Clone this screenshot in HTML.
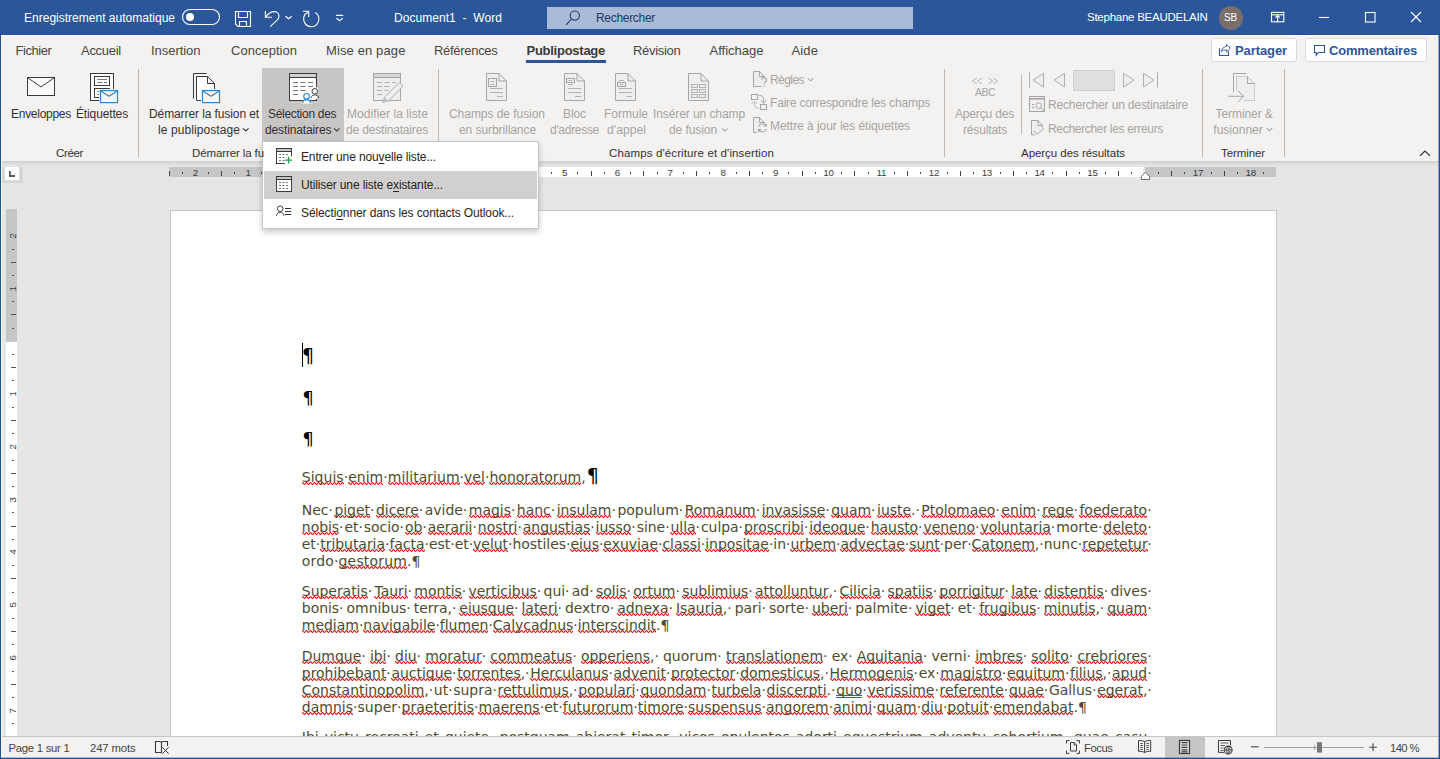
<!DOCTYPE html>
<html lang="fr">
<head>
<meta charset="utf-8">
<title>Document1 - Word</title>
<style>
*{box-sizing:border-box;margin:0;padding:0}
html,body{width:1440px;height:759px;overflow:hidden;background:#e6e6e6}
body{font-family:"Liberation Sans",sans-serif;font-size:12px;color:#323130}
#app{position:relative;width:1440px;height:759px;overflow:hidden;background:#e6e6e6}
.abs{position:absolute}
.t u{text-decoration:underline;text-decoration-thickness:1px;text-underline-offset:1.5px}
.t{position:absolute;white-space:pre;line-height:1;font-family:"Liberation Sans",sans-serif}
#title{position:absolute;left:0;top:0;width:1440px;height:35px;background:#2b579a}
#search{position:absolute;left:547px;top:7px;width:366px;height:22px;background:#a9bbd7}
#ribbon{position:absolute;left:1px;top:35px;width:1438px;height:126px;background:#f3f2f1}
#rshadow{position:absolute;left:1px;top:161px;width:1438px;height:6px;background:linear-gradient(#cfcecd,#dcdcdb 40%,#e6e6e6)}
.sep{position:absolute;width:1px;background:#bcb9b6;top:69px;height:88px}
#selbtn{position:absolute;left:262px;top:68px;width:82px;height:73px;background:#c8c6c4}
#tabul{position:absolute;left:526px;top:60px;width:80px;height:3px;background:#2b579a}
.btn{position:absolute;top:38px;height:24px;background:#fff;border:1px solid #dcdad8;border-radius:3px}
#menu{position:absolute;left:262px;top:141px;width:277px;height:88px;background:#fff;border:1px solid #c6c4c2;box-shadow:0 3px 6px rgba(0,0,0,.22)}
#mhl{position:absolute;left:264px;top:171px;width:273px;height:28px;background:#d2d0ce}
/* rulers */
#hr{position:absolute;left:169px;top:167px;width:1107px;height:10px;background:#c6c6c6}
#hrw{position:absolute;left:301px;top:167px;width:842px;height:10px;background:#fff}
#hrgap{position:absolute;left:1143px;top:167px;width:2px;height:10px;background:#e6e6e6}
.rn{position:absolute;top:167.5px;width:20px;height:10px;line-height:10px;text-align:center;font-size:9.8px;letter-spacing:-0.3px;color:#3c3c3c}
.tk{position:absolute;top:171px;width:1px;height:5px;background:#444}
.dt{position:absolute;top:172px;width:1px;height:2px;background:#444}
#vr{position:absolute;left:6px;top:209px;width:11px;height:527px;background:#fff}
#vrg{position:absolute;left:6px;top:209px;width:11px;height:133px;background:#c6c6c6}
.vn{position:absolute;left:3px;width:20px;height:20px;line-height:20px;text-align:center;font-size:9.6px;letter-spacing:-0.2px;color:#3c3c3c;transform:rotate(-90deg)}
.vtk{position:absolute;left:11px;width:5px;height:1px;background:#555}
.vdt{position:absolute;left:12px;width:2px;height:1px;background:#555}
#tabsel{position:absolute;left:2px;top:162px;width:21px;height:21px;background:#d6d6d6}
#tabsel i{position:absolute;left:3px;top:4px;width:14px;height:14px;background:#fdfdfd;box-shadow:0 0 0 1px #dcdcdc}
#page{position:absolute;left:170px;top:210px;width:1107px;height:527px;background:#fff;border:1px solid #c6c6c6;border-bottom:0}
/* doc text */
.ln{position:absolute;left:301.8px;width:845.5px;height:17px;line-height:17px;font-family:"DejaVu Sans","Liberation Sans",sans-serif;font-size:14px;color:#4f4b2e;white-space:nowrap;display:flex;justify-content:flex-start;align-items:baseline}
.ln.j{justify-content:space-between}
.ln .hang{position:absolute;left:845.5px}
.ln .w,.ln .d{display:block;flex:none}
.ln u{text-decoration:none;background:
linear-gradient(90deg,#f21818 0px,#f21818 1px,rgba(242,24,24,.38) 1px,rgba(242,24,24,.38) 2px,transparent 2px,transparent 3px,rgba(242,24,24,.38) 3px,rgba(242,24,24,.38) 4px) 0 13px/4px 1px repeat-x,
linear-gradient(90deg,rgba(242,24,24,.38) 0px,rgba(242,24,24,.38) 1px,#f21818 1px,#f21818 2px,rgba(242,24,24,.38) 2px,rgba(242,24,24,.38) 3px,#f21818 3px,#f21818 4px) 0 14px/4px 1px repeat-x,
linear-gradient(90deg,transparent 0px,transparent 1px,rgba(242,24,24,.38) 1px,rgba(242,24,24,.38) 2px,#f21818 2px,#f21818 3px,rgba(242,24,24,.38) 3px,rgba(242,24,24,.38) 4px) 0 15px/4px 1px repeat-x}
.ln u.gr{background:linear-gradient(#2160d6,#2160d6) 0 13px/100% 1px no-repeat,linear-gradient(#2160d6,#2160d6) 0 15px/100% 1px no-repeat}
.ln b.pm{font-weight:400;color:#4f4b2e}
b.bp{font-family:"DejaVu Sans",sans-serif;font-weight:400;color:#000;line-height:1;display:block}
.ln b.bp{line-height:0}
#status{position:absolute;left:1px;top:737px;width:1438px;height:21px;background:#f3f2f1}
#stline{position:absolute;left:1px;top:736px;width:1438px;height:1px;background:#c6c6c6}
#bl{position:absolute;left:0;top:35px;width:1px;height:724px;background:#1f4f98}
#br{position:absolute;left:1439px;top:35px;width:1px;height:724px;background:#1f4f98}
#br2{position:absolute;left:1438px;top:35px;width:1px;height:724px;background:#2b579a;opacity:.45}
#bb{position:absolute;left:0;top:758px;width:1440px;height:1px;background:#1f4f98}
#bb2{position:absolute;left:0;top:757px;width:1440px;height:1px;background:#2b579a;opacity:.35}
#stsel{position:absolute;left:1165px;top:737px;width:40px;height:21px;background:#c8c6c4}
svg{position:absolute;overflow:visible}
</style>
</head>
<body>
<div id="app">
<!-- document area -->
<div id="hr"></div><div id="hrw"></div><div id="hrgap"></div>
<i class="tk" style="left:169.0px"></i>
<i class="dt" style="left:181.6px"></i>
<span class="rn" style="left:185.3px">2</span>
<i class="dt" style="left:208.0px"></i>
<i class="tk" style="left:221.1px"></i>
<i class="dt" style="left:234.3px"></i>
<span class="rn" style="left:238.0px">1</span>
<i class="dt" style="left:260.7px"></i>
<i class="tk" style="left:273.9px"></i>
<i class="dt" style="left:287.1px"></i>
<i class="dt" style="left:313.5px"></i>
<i class="tk" style="left:326.7px"></i>
<i class="dt" style="left:339.9px"></i>
<span class="rn" style="left:343.6px">1</span>
<i class="dt" style="left:366.3px"></i>
<i class="tk" style="left:379.5px"></i>
<i class="dt" style="left:392.6px"></i>
<span class="rn" style="left:396.3px">2</span>
<i class="dt" style="left:419.0px"></i>
<i class="tk" style="left:432.2px"></i>
<i class="dt" style="left:445.4px"></i>
<span class="rn" style="left:449.1px">3</span>
<i class="dt" style="left:471.8px"></i>
<i class="tk" style="left:485.0px"></i>
<i class="dt" style="left:498.2px"></i>
<span class="rn" style="left:501.9px">4</span>
<i class="dt" style="left:524.6px"></i>
<i class="tk" style="left:537.8px"></i>
<i class="dt" style="left:551.0px"></i>
<span class="rn" style="left:554.7px">5</span>
<i class="dt" style="left:577.3px"></i>
<i class="tk" style="left:590.5px"></i>
<i class="dt" style="left:603.7px"></i>
<span class="rn" style="left:607.4px">6</span>
<i class="dt" style="left:630.1px"></i>
<i class="tk" style="left:643.3px"></i>
<i class="dt" style="left:656.5px"></i>
<span class="rn" style="left:660.2px">7</span>
<i class="dt" style="left:682.9px"></i>
<i class="tk" style="left:696.1px"></i>
<i class="dt" style="left:709.3px"></i>
<span class="rn" style="left:713.0px">8</span>
<i class="dt" style="left:735.7px"></i>
<i class="tk" style="left:748.8px"></i>
<i class="dt" style="left:762.0px"></i>
<span class="rn" style="left:765.7px">9</span>
<i class="dt" style="left:788.4px"></i>
<i class="tk" style="left:801.6px"></i>
<i class="dt" style="left:814.8px"></i>
<span class="rn" style="left:818.5px">10</span>
<i class="dt" style="left:841.2px"></i>
<i class="tk" style="left:854.4px"></i>
<i class="dt" style="left:867.6px"></i>
<span class="rn" style="left:871.3px">11</span>
<i class="dt" style="left:894.0px"></i>
<i class="tk" style="left:907.2px"></i>
<i class="dt" style="left:920.3px"></i>
<span class="rn" style="left:924.0px">12</span>
<i class="dt" style="left:946.7px"></i>
<i class="tk" style="left:959.9px"></i>
<i class="dt" style="left:973.1px"></i>
<span class="rn" style="left:976.8px">13</span>
<i class="dt" style="left:999.5px"></i>
<i class="tk" style="left:1012.7px"></i>
<i class="dt" style="left:1025.9px"></i>
<span class="rn" style="left:1029.6px">14</span>
<i class="dt" style="left:1052.3px"></i>
<i class="tk" style="left:1065.5px"></i>
<i class="dt" style="left:1078.7px"></i>
<span class="rn" style="left:1082.4px">15</span>
<i class="dt" style="left:1105.0px"></i>
<i class="tk" style="left:1118.2px"></i>
<i class="dt" style="left:1131.4px"></i>
<i class="dt" style="left:1157.8px"></i>
<i class="tk" style="left:1171.0px"></i>
<i class="dt" style="left:1184.2px"></i>
<span class="rn" style="left:1187.9px">17</span>
<i class="dt" style="left:1210.6px"></i>
<i class="tk" style="left:1223.8px"></i>
<i class="dt" style="left:1237.0px"></i>
<span class="rn" style="left:1240.7px">18</span>
<i class="dt" style="left:1263.4px"></i>
<div id="tabsel"><i></i></div>
<div id="page"></div>
<div id="vr"></div><div id="vrg"></div>
<div id="vruler" class="abs" style="left:0;top:0">
<span class="vn" style="top:225.8px">2</span>
<i class="vdt" style="top:248.5px"></i>
<i class="vtk" style="top:261.6px"></i>
<i class="vdt" style="top:274.8px"></i>
<span class="vn" style="top:278.5px">1</span>
<i class="vdt" style="top:301.2px"></i>
<i class="vtk" style="top:314.4px"></i>
<i class="vdt" style="top:327.6px"></i>
<i class="vdt" style="top:354.0px"></i>
<i class="vtk" style="top:367.2px"></i>
<i class="vdt" style="top:380.4px"></i>
<span class="vn" style="top:384.1px">1</span>
<i class="vdt" style="top:406.8px"></i>
<i class="vtk" style="top:420.0px"></i>
<i class="vdt" style="top:433.1px"></i>
<span class="vn" style="top:436.8px">2</span>
<i class="vdt" style="top:459.5px"></i>
<i class="vtk" style="top:472.7px"></i>
<i class="vdt" style="top:485.9px"></i>
<span class="vn" style="top:489.6px">3</span>
<i class="vdt" style="top:512.3px"></i>
<i class="vtk" style="top:525.5px"></i>
<i class="vdt" style="top:538.7px"></i>
<span class="vn" style="top:542.4px">4</span>
<i class="vdt" style="top:565.1px"></i>
<i class="vtk" style="top:578.3px"></i>
<i class="vdt" style="top:591.5px"></i>
<span class="vn" style="top:595.2px">5</span>
<i class="vdt" style="top:617.8px"></i>
<i class="vtk" style="top:631.0px"></i>
<i class="vdt" style="top:644.2px"></i>
<span class="vn" style="top:647.9px">6</span>
<i class="vdt" style="top:670.6px"></i>
<i class="vtk" style="top:683.8px"></i>
<i class="vdt" style="top:697.0px"></i>
<span class="vn" style="top:700.7px">7</span>
<i class="vdt" style="top:723.4px"></i>
</div>
<!-- DOCTEXT -->
<div class="ln j" style="top:502px;letter-spacing:-0.040px"><span class="w">Nec·</span><span class="w"><u class="sp">piget</u>·</span><span class="w"><u class="sp">dicere</u>·</span><span class="w">avide·</span><span class="w"><u class="sp">magis</u>·</span><span class="w"><u class="sp">hanc</u>·</span><span class="w"><u class="sp">insulam</u>·</span><span class="w">populum·</span><span class="w"><u class="sp">Romanum</u>·</span><span class="w"><u class="sp">invasisse</u>·</span><span class="w"><u class="sp">quam</u>·</span><span class="w"><u class="sp">iuste</u>.·</span><span class="w"><u class="sp">Ptolomaeo</u>·</span><span class="w"><u class="sp">enim</u>·</span><span class="w"><u class="sp">rege</u>·</span><span class="w"><u class="sp">foederato</u></span><span class="d hang">·</span></div>
<div class="ln j" style="top:519px;letter-spacing:-0.040px"><span class="w"><u class="sp">nobis</u>·</span><span class="w">et·</span><span class="w">socio·</span><span class="w"><u class="sp">ob</u>·</span><span class="w"><u class="sp">aerarii</u>·</span><span class="w"><u class="sp">nostri</u>·</span><span class="w"><u class="sp">angustias</u>·</span><span class="w"><u class="sp">iusso</u>·</span><span class="w">sine·</span><span class="w"><u class="sp">ulla</u>·</span><span class="w">culpa·</span><span class="w"><u class="sp">proscribi</u>·</span><span class="w"><u class="sp">ideoque</u>·</span><span class="w"><u class="sp">hausto</u>·</span><span class="w"><u class="sp">veneno</u>·</span><span class="w"><u class="sp">voluntaria</u>·</span><span class="w">morte·</span><span class="w"><u class="sp">deleto</u></span><span class="d hang">·</span></div>
<div class="ln j" style="top:536px;letter-spacing:-0.042px"><span class="w">et·</span><span class="w"><u class="sp">tributaria</u>·</span><span class="w"><u class="sp">facta</u>·</span><span class="w">est·</span><span class="w">et·</span><span class="w"><u class="sp">velut</u>·</span><span class="w">hostiles·</span><span class="w"><u class="sp">eius</u>·</span><span class="w"><u class="sp">exuviae</u>·</span><span class="w"><u class="sp">classi</u>·</span><span class="w"><u class="sp">inpositae</u>·</span><span class="w">in·</span><span class="w"><u class="sp">urbem</u>·</span><span class="w"><u class="sp">advectae</u>·</span><span class="w"><u class="sp">sunt</u>·</span><span class="w">per·</span><span class="w"><u class="sp">Catonem</u>,·</span><span class="w">nunc·</span><span class="w"><u class="sp">repetetur</u></span><span class="d hang">·</span></div>
<div class="ln" style="top:553px;letter-spacing:0.160px"><span class="w">ordo·</span><span class="w"><u class="sp">gestorum</u>.<b class="pm">¶</b></span></div>
<div class="ln j" style="top:583px;letter-spacing:-0.040px"><span class="w"><u class="sp">Superatis</u>·</span><span class="w"><u class="sp">Tauri</u>·</span><span class="w"><u class="sp">montis</u>·</span><span class="w"><u class="sp">verticibus</u>·</span><span class="w">qui·</span><span class="w">ad·</span><span class="w"><u class="sp">solis</u>·</span><span class="w"><u class="sp">ortum</u>·</span><span class="w"><u class="sp">sublimius</u>·</span><span class="w"><u class="sp">attolluntur</u>,·</span><span class="w"><u class="sp">Cilicia</u>·</span><span class="w"><u class="sp">spatiis</u>·</span><span class="w"><u class="sp">porrigitur</u>·</span><span class="w"><u class="sp">late</u>·</span><span class="w"><u class="sp">distentis</u>·</span><span class="w">dives</span><span class="d hang">·</span></div>
<div class="ln j" style="top:600px;letter-spacing:-0.040px"><span class="w">bonis·</span><span class="w">omnibus·</span><span class="w">terra,·</span><span class="w"><u class="sp">eiusque</u>·</span><span class="w"><u class="sp">lateri</u>·</span><span class="w">dextro·</span><span class="w"><u class="sp">adnexa</u>·</span><span class="w"><u class="sp">Isauria</u>,·</span><span class="w">pari·</span><span class="w">sorte·</span><span class="w"><u class="sp">uberi</u>·</span><span class="w">palmite·</span><span class="w"><u class="sp">viget</u>·</span><span class="w">et·</span><span class="w"><u class="sp">frugibus</u>·</span><span class="w"><u class="sp">minutis</u>,·</span><span class="w"><u class="sp">quam</u></span><span class="d hang">·</span></div>
<div class="ln" style="top:617px;letter-spacing:-0.030px"><span class="w"><u class="sp">mediam</u>·</span><span class="w"><u class="sp">navigabile</u>·</span><span class="w"><u class="sp">flumen</u>·</span><span class="w"><u class="sp">Calycadnus</u>·</span><span class="w"><u class="sp">interscindit</u>.<b class="pm">¶</b></span></div>
<div class="ln j" style="top:648px;letter-spacing:-0.040px"><span class="w"><u class="sp">Dumque</u>·</span><span class="w"><u class="sp">ibi</u>·</span><span class="w"><u class="sp">diu</u>·</span><span class="w"><u class="sp">moratur</u>·</span><span class="w"><u class="sp">commeatus</u>·</span><span class="w"><u class="sp">opperiens</u>,·</span><span class="w">quorum·</span><span class="w"><u class="sp">translationem</u>·</span><span class="w">ex·</span><span class="w"><u class="sp">Aquitania</u>·</span><span class="w">verni·</span><span class="w"><u class="sp">imbres</u>·</span><span class="w"><u class="sp">solito</u>·</span><span class="w"><u class="sp">crebriores</u></span><span class="d hang">·</span></div>
<div class="ln j" style="top:665px;letter-spacing:-0.040px"><span class="w"><u class="sp">prohibebant</u>·</span><span class="w"><u class="sp">auctique</u>·</span><span class="w"><u class="sp">torrentes</u>,·</span><span class="w"><u class="sp">Herculanus</u>·</span><span class="w"><u class="sp">advenit</u>·</span><span class="w"><u class="sp">protector</u>·</span><span class="w"><u class="sp">domesticus</u>,·</span><span class="w"><u class="sp">Hermogenis</u>·</span><span class="w">ex·</span><span class="w"><u class="sp">magistro</u>·</span><span class="w"><u class="sp">equitum</u>·</span><span class="w"><u class="sp">filius</u>,·</span><span class="w"><u class="sp">apud</u></span><span class="d hang">·</span></div>
<div class="ln j" style="top:682px;letter-spacing:-0.040px"><span class="w"><u class="sp">Constantinopolim</u>,·</span><span class="w">ut·</span><span class="w">supra·</span><span class="w"><u class="sp">rettulimus</u>,·</span><span class="w"><u class="sp">populari</u>·</span><span class="w"><u class="sp">quondam</u>·</span><span class="w"><u class="sp">turbela</u>·</span><span class="w"><u class="sp">discerpti</u>.·</span><span class="w"><u class="gr">quo</u>·</span><span class="w"><u class="sp">verissime</u>·</span><span class="w"><u class="sp">referente</u>·</span><span class="w"><u class="sp">quae</u>·</span><span class="w">Gallus·</span><span class="w"><u class="sp">egerat</u>,</span><span class="d hang">·</span></div>
<div class="ln" style="top:699px;letter-spacing:0.018px"><span class="w"><u class="sp">damnis</u>·</span><span class="w">super·</span><span class="w"><u class="sp">praeteritis</u>·</span><span class="w"><u class="sp">maerens</u>·</span><span class="w">et·</span><span class="w"><u class="sp">futurorum</u>·</span><span class="w"><u class="sp">timore</u>·</span><span class="w"><u class="sp">suspensus</u>·</span><span class="w"><u class="sp">angorem</u>·</span><span class="w"><u class="sp">animi</u>·</span><span class="w"><u class="sp">quam</u>·</span><span class="w"><u class="sp">diu</u>·</span><span class="w"><u class="sp">potuit</u>·</span><span class="w"><u class="sp">emendabat</u>.<b class="pm">¶</b></span></div>
<div class="ln j" style="top:729px;letter-spacing:-0.040px"><span class="w">Ibi·</span><span class="w">victu·</span><span class="w">recreati·</span><span class="w">et·</span><span class="w">quiete,·</span><span class="w">postquam·</span><span class="w">abierat·</span><span class="w">timor,·</span><span class="w">vicos·</span><span class="w">opulentos·</span><span class="w">adorti·</span><span class="w">equestrium·</span><span class="w">adventu·</span><span class="w">cohortium,·</span><span class="w">quae·</span><span class="w">casu</span><span class="d hang">·</span></div>
<div class="ln" style="top:469px;letter-spacing:0.024px"><span class="w"><u class="sp">Siquis</u>·</span><span class="w"><u class="sp">enim</u>·</span><span class="w"><u class="sp">militarium</u>·</span><span class="w"><u class="sp">vel</u>·</span><span class="w"><u class="sp">honoratorum</u>,</span><b class="bp" style="font-size:19px;margin-left:1px">¶</b></div>
<b class="bp abs" style="left:301.9px;top:345.8px;font-size:19px">¶</b>
<b class="bp abs" style="left:302.4px;top:389.6px;font-size:17.7px">¶</b>
<b class="bp abs" style="left:302.4px;top:430.8px;font-size:17.7px">¶</b>
<i class="abs" style="left:302px;top:343px;width:1px;height:24px;background:#000"></i>
<!-- title bar -->
<div id="title"></div>
<div id="search"></div>
<!-- ribbon -->
<div id="ribbon"></div>
<div id="rshadow"></div>
<div id="selbtn"></div>
<div id="tabul"></div>
<div class="sep" style="left:138px"></div>
<div class="sep" style="left:438px"></div>
<div class="sep" style="left:944px"></div>
<div class="sep" style="left:1021px;top:75px;height:59px"></div>
<div class="sep" style="left:1202px"></div>
<div class="sep" style="left:1284px"></div>
<div class="btn" style="left:1211px;width:86px"></div>
<div class="btn" style="left:1305px;width:122px"></div>
<!-- status -->
<div id="stline"></div>
<div id="status"></div>
<div id="stsel"></div>
<!-- menu -->
<div id="menu"></div>
<div id="mhl"></div>
<svg width="1440" height="759" viewBox="0 0 1440 759" style="left:0;top:0"><g fill="none" stroke="#fff" stroke-width="1.1">
<!-- toggle -->
<rect x="182.5" y="9.5" width="37" height="15" rx="7.5"/>
<circle cx="190" cy="17" r="4" fill="#fff" stroke="none"/>
<!-- save -->
<path d="M235.5 11.5H250.5V26.5H238L235.5 24Z"/>
<path d="M238.5 11.5V17.5H247.5V11.5"/>
<path d="M239.5 26.5V21.5H246.5V26.5"/>
<!-- undo -->
<path d="M265.4 11V17.3H271.8"/>
<path d="M265.6 17.1C268 13.6 271.5 11.6 274.6 11.6C277.4 11.6 279 13.8 279 16.2C279 18 278 19.3 276.6 20.6L270.2 26.7"/>
<path d="M285.4 16.2L288.6 18.8L291.8 16.2" stroke-width="1.2"/>
<!-- redo -->
<path d="M303 11.3H308.7V17"/>
<path d="M308.3 11.9A7.7 7.7 0 1 0 315.2 12.4"/>
<!-- qat customize -->
<path d="M336 15.4H343.2M336.4 18.1L339.6 20.7L342.8 18.1" stroke-width="1.2"/>
<!-- window controls -->
<path d="M1319 17.5H1329"/>
<rect x="1365.5" y="12.5" width="9.5" height="9.5"/>
<path d="M1411 12L1421 22M1421 12L1411 22"/>
<!-- ribbon display options -->
<rect x="1271.5" y="12.4" width="12.3" height="9.4"/>
<path d="M1271.5 14.8H1284" stroke-width="1.1"/>
<path d="M1277.6 21.8V15.2M1275.4 17.7L1277.6 15.5L1279.8 17.7" stroke-width="1.1"/>
</g>
<!-- search magnifier -->
<g fill="none" stroke="#1d3765" stroke-width="1.1">
<circle cx="574.8" cy="15.6" r="4.6"/>
<path d="M571.4 19L566.2 24.8"/>
</g>
<!-- avatar -->
<circle cx="1231" cy="18" r="12" fill="#7a6e6b"/>
<!-- ===== ribbon: enabled icons ===== -->
<g fill="#fafafa" stroke="#3b3a39" stroke-width="1">
<!-- Enveloppes -->
<rect x="27.5" y="77.5" width="27" height="18"/>
<path d="M27.8 77.8L41 87L54.2 77.8" fill="none"/>
<!-- Etiquettes -->
<rect x="90.5" y="73.5" width="23" height="27" fill="#fff"/>
<rect x="94.5" y="76.5" width="15" height="9" fill="#fff"/>
<rect x="94.5" y="88.5" width="15" height="9" fill="#fff"/>
<path d="M97.2 79.5H107M97.2 82.5H102.5M104 82.5H107M97.2 91.5H100M97.2 94.5H100" stroke="#797775" fill="none"/>
<!-- Demarrer la fusion -->
<path d="M206.5 73.5H193.5V98.7" fill="none"/>
<path d="M196.5 100.5V76.5H207.5L214.5 83.5V100.5Z" fill="#fff"/>
<path d="M207.5 76.5V83.5H214.5" fill="none"/>
</g>
<!-- blue envelopes -->
<g fill="#fafafa" stroke="#2488d8" stroke-width="1.2">
<rect x="99" y="89" width="20" height="15" fill="#f3f2f1" stroke="none"/>
<rect x="100.5" y="90.6" width="17" height="12"/>
<path d="M100.8 90.9L109 96.3L117.2 90.9" fill="none"/>
<rect x="201" y="89" width="20" height="15" fill="#f3f2f1" stroke="none"/>
<rect x="202.5" y="90.6" width="17" height="12"/>
<path d="M202.8 90.9L211 96.3L219.2 90.9" fill="none"/>
</g>
<!-- Selection des destinataires -->
<g fill="#fff" stroke="#3b3a39" stroke-width="1">
<rect x="289.5" y="73.5" width="27" height="27"/>
<rect x="289.5" y="73.5" width="27" height="4" fill="#d2d0ce"/>
<path d="M293 82.5H298M300.3 82.5H305.6M308 82.5H313M293 86.5H298M300.3 86.5H305.6M308 86.5H313M293 90.5H298M300.3 90.5H305.6M293 94.5H298" stroke="#797775" fill="none"/>
<!-- halo -->
<circle cx="314.8" cy="91.3" r="4.3" fill="#fff" stroke="none"/>
<path d="M309.6 99C310 94 319.6 94 320 99Z" fill="#fff" stroke="none"/>
<rect x="317" y="90" width="3.5" height="9" fill="#c8c6c4" stroke="none"/>
<circle cx="314.8" cy="91.3" r="2.8"/>
<path d="M311 98C311.3 93.8 318.3 93.8 318.6 98" fill="none"/>
<rect x="301" y="100.9" width="12" height="3" fill="#c8c6c4" stroke="none"/>
<circle cx="306.6" cy="96.3" r="4.2" fill="#fff" stroke="none"/>
<path d="M301.4 103.4C301.8 98.6 311.4 98.6 311.8 103.4Z" fill="#fff" stroke="none"/>
<circle cx="306.6" cy="96.3" r="2.8" stroke="#2488d8" stroke-width="1.2"/>
<path d="M302.6 103C303 98.6 310.2 98.6 310.6 103" fill="none" stroke="#2488d8" stroke-width="1.2"/>
</g>
<!-- ===== ribbon: disabled icons ===== -->
<g fill="#efeeed" stroke="#a8a6a4" stroke-width="1">
<!-- Modifier la liste -->
<rect x="373.5" y="73.5" width="27" height="27"/>
<rect x="373.5" y="73.5" width="27" height="4" fill="#d8d6d4"/>
<path d="M377 82.5H382M384.3 82.5H389.6M392 82.5H396M377 86.5H382M384.3 86.5H389.6M377 90.5H382M384.3 90.5H388M377 94.5H382" stroke="#b5b3b1" fill="none"/>
<path d="M382.8 102.3L384.6 97.2L398.2 83.6A2 2 0 0 1 401 83.6L402 84.6A2 2 0 0 1 402 87.4L388.2 101Z" fill="#f1f0ef" stroke="#b0aeac"/>
<path d="M382.8 102.3L384.6 97.2L388.2 101Z" fill="#c4c2c0" stroke="none"/>
<!-- Champs de fusion -->
<path d="M486.5 73.5H499L506.5 81V100.5H486.5Z"/>
<path d="M499 73.5V81H506.5" fill="none"/>
<rect x="488.5" y="78.5" width="8" height="8" fill="none"/>
<path d="M490.5 81.5H494.5M490.5 84.5H494.5M490 88.5H503M490 92.5H503M497 96.5H503" fill="none" stroke="#b5b3b1"/>
<!-- Bloc d'adresse -->
<path d="M564.5 73.5H577L584.5 81V100.5H564.5Z"/>
<path d="M577 73.5V81H584.5" fill="none"/>
<rect x="566.5" y="78.5" width="8" height="4" fill="none"/>
<path d="M568.5 80.5H572.5M568 84.5H573M568 88.5H581M568 92.5H581M575 96.5H581" fill="none" stroke="#b5b3b1"/>
<!-- Formule d'appel -->
<path d="M615.5 73.5H628L635.5 81V100.5H615.5Z"/>
<path d="M628 73.5V81H635.5" fill="none"/>
<rect x="617.5" y="82.5" width="8" height="4" fill="none"/>
<path d="M619 80.5H624M619.5 84.5H623.5M619 88.5H632M619 92.5H632M626 96.5H632" fill="none" stroke="#b5b3b1"/>
<!-- Inserer un champ de fusion -->
<path d="M688.5 73.5H701L708.5 81V100.5H688.5Z"/>
<path d="M701 73.5V81H708.5" fill="none"/>
<g fill="none" stroke="#b5b3b1"><rect x="691.5" y="84.5" width="6" height="3"/><rect x="699.5" y="84.5" width="6" height="3"/><rect x="691.5" y="89.5" width="6" height="3"/><rect x="699.5" y="89.5" width="6" height="3"/><rect x="691.5" y="94.5" width="6" height="3"/><rect x="699.5" y="94.5" width="6" height="3"/></g>
<!-- Regles -->
<path d="M761.5 86.5H753.5V71.5H759.5L764.5 76.5V78"/>
<path d="M759.5 71.5V76.5H764.5" fill="none"/>
<path d="M761.6 79.6C761.8 77 766.6 77 766.6 79.8C766.6 81.8 764.2 81.8 764.2 84.2M764.2 85.8V86.9" fill="none" stroke="#a8a6a4" stroke-width="1.1"/>
<!-- Faire correspondre -->
<rect x="751.5" y="94.5" width="6" height="5" fill="none"/>
<rect x="760.5" y="104.5" width="6" height="5" fill="none"/>
<path d="M758.6 95.2C762 95.2 763.6 97 763.6 99.5V103M760.9 100.4L763.6 103.2L766.3 100.4" fill="none"/>
<path d="M759.2 108.3C756 108.3 754.4 106.5 754.4 104V101.2M751.6 103.9L754.4 101L757.2 103.9" fill="none" stroke="#bdbbb9"/>
<!-- Mettre a jour les etiquettes -->
<path d="M757 132.5H753.5V117.5H759.5L764.5 122.5V123"/>
<path d="M759.5 117.5V122.5H764.5" fill="none"/>
<path d="M758.6 126.6A4 4 0 0 1 765.8 125.6M766.2 123.4V126H763.6M766.2 129A4 4 0 0 1 759 130M758.6 132.2V129.6H761.2" fill="none" stroke="#a8a6a4" stroke-width="1.1"/>
<!-- Apercu des resultats chevrons -->
<path d="M977 78L972.5 81L977 84M982 78L977.5 81L982 84M988.2 78L992.7 81L988.2 84M993.2 78L997.7 81L993.2 84" fill="none" stroke="#b0aeac" stroke-width="0.9"/>
<!-- record navigation -->
<path d="M1029.5 72V87.5" fill="none" stroke="#b0aeac"/>
<path d="M1043.5 73.3V87L1033 80.15Z" stroke="#b0aeac"/>
<path d="M1064.5 73.3V87L1054 80.15Z" stroke="#b0aeac"/>
<rect x="1073.5" y="70.5" width="41" height="20" fill="#e1dfdd" stroke="#d2d0ce"/>
<path d="M1123.5 73.3V87L1134 80.15Z" stroke="#b0aeac"/>
<path d="M1143.5 73.3V87L1154 80.15Z" stroke="#b0aeac"/>
<path d="M1157.5 72V87.5" fill="none" stroke="#b0aeac"/>
<!-- Rechercher un destinataire -->
<rect x="1029.5" y="96.5" width="15" height="15"/>
<path d="M1029.5 98.8H1044.5" stroke-width="1.6" fill="none"/>
<path d="M1032 104.5H1034M1032 107.5H1034" fill="none"/>
<circle cx="1038.6" cy="105.6" r="2.8" fill="#f3f2f1"/>
<path d="M1040.6 107.6L1045 112" fill="none"/>
<!-- Rechercher les erreurs -->
<path d="M1034.8 134.8H1031.5V120.5H1038L1042.5 125.5V127.6"/>
<path d="M1038 120.5V125.5H1042.5" fill="none"/>
<path d="M1033.8 131L1036.9 134.4L1044.4 127.9" fill="none"/>
<!-- Terminer & fusionner -->
<path d="M1246.5 73.5H1233.5V92.5" fill="none"/>
<path d="M1236.5 90V76.5H1247.5L1254.5 83.5V100.5H1244" />
<path d="M1236.5 90V76.5H1247.5L1254.5 83.5V100.5H1244L1244 93Z" stroke="none"/>
<path d="M1247.5 76.5V83.5H1254.5" fill="none"/>
<path d="M1228.3 96.3H1243.4M1237.6 90.7L1243.6 96.3L1237.6 102.2" fill="none"/>
</g>
<!-- label chevrons -->
<g fill="none" stroke="#3b3a39" stroke-width="1.1">
<path d="M243 128.3L245.8 131L248.6 128.3"/>
<path d="M334 128.3L336.8 131L339.6 128.3"/>
</g>
<g fill="none" stroke="#a8a6a4" stroke-width="1.1">
<path d="M722 128.3L724.8 131L727.6 128.3"/>
<path d="M807.8 78.2L810.6 80.8L813.4 78.2"/>
<path d="M1266.7 128.2L1269.5 130.8L1272.3 128.2"/>
</g>
<!-- ===== dropdown menu icons ===== -->
<g fill="#fff" stroke="#3b3a39" stroke-width="1">
<rect x="276.5" y="148.5" width="15" height="15"/>
<rect x="276.5" y="148.5" width="15" height="3" fill="#c8c6c4"/>
<path d="M279 154.5H281M282.5 154.5H284.5M286 154.5H288M279 157.5H281M282.5 157.5H284.5M286 157.5H288M279 160.5H281M282.5 160.5H284.5" stroke="#797775" fill="none"/>
<rect x="284.8" y="156.3" width="8" height="8" fill="#fff" stroke="none"/>
<path d="M288.6 156.8V163.6M285.2 160.2H292" stroke="#21a045" stroke-width="1.3" fill="none"/>
<rect x="276.5" y="176.5" width="15" height="15"/>
<rect x="276.5" y="176.5" width="15" height="3" fill="#c8c6c4"/>
<path d="M279 182.5H281M282.5 182.5H284.5M286 182.5H288M279 185.5H281M282.5 185.5H284.5M286 185.5H288M279 188.5H281M282.5 188.5H284.5M286 188.5H288" stroke="#797775" fill="none"/>
<circle cx="280.2" cy="208.7" r="2.8" fill="none"/>
<path d="M276.5 215.8C276.8 211 283.6 211 283.9 215.8" fill="none"/>
<path d="M285 208.5H291.2M285 211.5H291.2M285 214.5H291.2" fill="none"/>
</g>
<!-- ===== Partager / Commentaires icons ===== -->
<g fill="none" stroke="#2b579a" stroke-width="1.1">
<path d="M1219.5 48.2V55.5H1228.5V51.3"/>
<path d="M1221.4 51.6C1221.8 48.6 1223.6 46.8 1226.5 46.4V44.4L1230.3 48.2L1226.5 51.9V49.9C1224.2 49.8 1222.6 50.3 1221.4 51.6Z" stroke-width="0.9"/>
<path d="M1314.5 45.5H1324.5V52.5H1318.5L1316.2 55.2V52.5H1314.5Z"/>
</g>
<!-- ===== status bar icons ===== -->
<g fill="none" stroke="#3b3a39" stroke-width="1.1">
<!-- proofing -->
<path d="M161.5 743.2V752.5H155.5V741.5H159.8Q161.5 741.5 161.5 743.2Q161.5 741.5 163.2 741.5H167.5V746"/>
<path d="M162.4 747.3L168.7 753.7M168.7 747.3L162.4 753.7" stroke-width="1"/>
<!-- focus -->
<path d="M1066.5 743.4V740.6H1069.4M1076.6 740.6H1079.5V743.4M1079.5 750.6V753.4H1076.6M1069.4 753.4H1066.5V750.6" stroke-width="1"/>
<path d="M1070.5 751V742.5H1074.2L1076.5 744.8V751Z" stroke-width="1"/>
<path d="M1074 742.6V745H1076.4" stroke-width="0.8"/>
<!-- read mode -->
<path d="M1144.6 741.8V752.6M1144.6 741.8C1143 740.6 1140.6 740.4 1138.5 740.6V751.4C1140.6 751.2 1143 751.4 1144.6 752.6C1146.2 751.4 1148.6 751.2 1150.7 751.4V740.6C1148.6 740.4 1146.2 740.6 1144.6 741.8Z" stroke-width="1"/>
<path d="M1140.3 743.5H1142.8M1140.3 745.5H1142.8M1140.3 747.5H1142.8M1140.3 749.5H1142.8M1146.4 743.5H1148.9M1146.4 745.5H1148.9M1146.4 747.5H1148.9M1146.4 749.5H1148.9" stroke-width="0.9"/>
<!-- print layout -->
<rect x="1179.5" y="740.5" width="10" height="13" stroke-width="1.2" fill="#e6e4e2"/>
<path d="M1181.5 742.6H1187.5M1181.5 745H1187.5M1181.5 747.4H1187.5M1181.5 749.8H1187.5M1181.5 751.8H1187.5" stroke-width="1.2"/>
<!-- web layout -->
<path d="M1224 752.4H1218.5V740.5H1230.5V745.5" stroke-width="1"/>
<path d="M1220.5 743H1228.5M1220.5 745.5H1225M1220.5 748H1223.5M1220.5 750.5H1223.5" stroke-width="1" stroke="#605e5c"/>
<circle cx="1228.2" cy="750" r="3.9" fill="#f3f2f1" stroke-width="1.1"/>
<path d="M1224.3 750H1232.1M1228.2 746.1V753.9M1228.2 746.1C1225.8 748 1225.8 752 1228.2 753.9C1230.6 752 1230.6 748 1228.2 746.1" stroke-width="0.8"/>
<!-- zoom slider -->
<path d="M1251 746.8H1258.8" stroke="#444" stroke-width="1.1"/>
<path d="M1264 747.5H1364" stroke="#a19f9d" stroke-width="1"/>
<path d="M1314.7 745V750.2" stroke="#a19f9d" stroke-width="1"/>
<rect x="1317" y="742.2" width="5" height="10.4" fill="#777" stroke="none"/>
<path d="M1369.2 747.2H1376.8M1373 743.4V751" stroke="#444" stroke-width="1.1"/>
</g>
<!-- ===== ruler bits ===== -->
<path d="M1145.5 172.2L1149.6 176.4V179.5H1141.4V176.4Z" fill="#fff" stroke="#6a6a6a" stroke-width="1"/>
<path d="M9.9 171V176H15" fill="none" stroke="#5a5a5a" stroke-width="1.8"/>
<!-- ribbon collapse chevron -->
<path d="M1420 155.8L1425 151L1430 155.8" fill="none" stroke="#3b3a39" stroke-width="1.2"/>
</svg>
<!-- labels -->
<span class="t" style="left:24px;top:11.84px;font-size:12px;font-weight:400;color:#fff;letter-spacing:0.010px;">Enregistrement automatique</span>
<span class="t" style="left:394px;top:11.84px;font-size:12px;font-weight:400;color:#fff;letter-spacing:0.047px;">Document1  -  Word</span>
<span class="t" style="left:596px;top:11.84px;font-size:12px;font-weight:400;color:#1f3a68;letter-spacing:-0.303px;">Rechercher</span>
<span class="t" style="left:1087px;top:12.27px;font-size:11.5px;font-weight:400;color:#fff;letter-spacing:-0.252px;">Stephane BEAUDELAIN</span>
<span class="t" style="left:1224px;top:13.04px;font-size:10px;font-weight:400;color:#fff;letter-spacing:-0.172px;">SB</span>
<span class="t" style="left:15.5px;top:43.50px;font-size:13px;font-weight:400;color:#484644;letter-spacing:-0.431px;">Fichier</span>
<span class="t" style="left:81px;top:43.50px;font-size:13px;font-weight:400;color:#484644;letter-spacing:-0.275px;">Accueil</span>
<span class="t" style="left:151px;top:43.50px;font-size:13px;font-weight:400;color:#484644;letter-spacing:-0.042px;">Insertion</span>
<span class="t" style="left:231px;top:43.50px;font-size:13px;font-weight:400;color:#484644;letter-spacing:0.022px;">Conception</span>
<span class="t" style="left:326px;top:43.50px;font-size:13px;font-weight:400;color:#484644;letter-spacing:0.120px;">Mise en page</span>
<span class="t" style="left:434px;top:43.50px;font-size:13px;font-weight:400;color:#484644;letter-spacing:-0.298px;">Références</span>
<span class="t" style="left:526.5px;top:43.50px;font-size:13px;font-weight:700;color:#3b3a39;letter-spacing:-0.260px;">Publipostage</span>
<span class="t" style="left:633px;top:43.50px;font-size:13px;font-weight:400;color:#484644;letter-spacing:-0.295px;">Révision</span>
<span class="t" style="left:709.5px;top:43.50px;font-size:13px;font-weight:400;color:#484644;letter-spacing:0.003px;">Affichage</span>
<span class="t" style="left:791.5px;top:43.50px;font-size:13px;font-weight:400;color:#484644;letter-spacing:0.117px;">Aide</span>
<span class="t" style="left:1235px;top:43.50px;font-size:13px;font-weight:700;color:#2b579a;letter-spacing:-0.094px;">Partager</span>
<span class="t" style="left:1329px;top:43.50px;font-size:13px;font-weight:700;color:#2b579a;letter-spacing:-0.193px;">Commentaires</span>
<span class="t" style="left:11px;top:107.84px;font-size:12px;font-weight:400;color:#323130;letter-spacing:-0.272px;">Enveloppes</span>
<span class="t" style="left:76px;top:107.84px;font-size:12px;font-weight:400;color:#323130;letter-spacing:-0.138px;">Étiquettes</span>
<span class="t" style="left:149px;top:107.84px;font-size:12px;font-weight:400;color:#323130;letter-spacing:-0.097px;">Démarrer la fusion et</span>
<span class="t" style="left:158px;top:123.84px;font-size:12px;font-weight:400;color:#323130;letter-spacing:0.084px;">le publipostage</span>
<span class="t" style="left:268px;top:107.84px;font-size:12px;font-weight:400;color:#323130;letter-spacing:-0.288px;">Sélection des</span>
<span class="t" style="left:265px;top:123.84px;font-size:12px;font-weight:400;color:#323130;letter-spacing:-0.134px;">destinataires</span>
<span class="t" style="left:347px;top:107.84px;font-size:12px;font-weight:400;color:#a6a4a2;letter-spacing:0.057px;">Modifier la liste</span>
<span class="t" style="left:346px;top:123.84px;font-size:12px;font-weight:400;color:#a6a4a2;letter-spacing:-0.171px;">de destinataires</span>
<span class="t" style="left:449px;top:107.84px;font-size:12px;font-weight:400;color:#a6a4a2;letter-spacing:-0.046px;">Champs de fusion</span>
<span class="t" style="left:459px;top:123.84px;font-size:12px;font-weight:400;color:#a6a4a2;letter-spacing:-0.070px;">en surbrillance</span>
<span class="t" style="left:563px;top:107.84px;font-size:12px;font-weight:400;color:#a6a4a2;letter-spacing:-0.086px;">Bloc</span>
<span class="t" style="left:550px;top:123.84px;font-size:12px;font-weight:400;color:#a6a4a2;letter-spacing:-0.295px;">d&#x27;adresse</span>
<span class="t" style="left:604px;top:107.84px;font-size:12px;font-weight:400;color:#a6a4a2;letter-spacing:-0.002px;">Formule</span>
<span class="t" style="left:607px;top:123.84px;font-size:12px;font-weight:400;color:#a6a4a2;letter-spacing:0.096px;">d&#x27;appel</span>
<span class="t" style="left:653px;top:107.84px;font-size:12px;font-weight:400;color:#a6a4a2;letter-spacing:-0.087px;">Insérer un champ</span>
<span class="t" style="left:669px;top:123.84px;font-size:12px;font-weight:400;color:#a6a4a2;letter-spacing:-0.078px;">de fusion</span>
<span class="t" style="left:770px;top:74.14px;font-size:12px;font-weight:400;color:#a6a4a2;letter-spacing:-0.560px;">Règles</span>
<span class="t" style="left:770px;top:97.34px;font-size:12px;font-weight:400;color:#a6a4a2;letter-spacing:-0.186px;">Faire correspondre les champs</span>
<span class="t" style="left:770px;top:120.34px;font-size:12px;font-weight:400;color:#a6a4a2;letter-spacing:-0.050px;">Mettre à jour les étiquettes</span>
<span class="t" style="left:975px;top:87.11px;font-size:10.5px;font-weight:400;color:#a6a4a2;letter-spacing:-0.531px;">ABC</span>
<span class="t" style="left:955px;top:107.84px;font-size:12px;font-weight:400;color:#a6a4a2;letter-spacing:-0.170px;">Aperçu des</span>
<span class="t" style="left:963px;top:123.84px;font-size:12px;font-weight:400;color:#a6a4a2;letter-spacing:-0.151px;">résultats</span>
<span class="t" style="left:1048px;top:99.24px;font-size:12px;font-weight:400;color:#a6a4a2;letter-spacing:-0.157px;">Rechercher un destinataire</span>
<span class="t" style="left:1048px;top:123.04px;font-size:12px;font-weight:400;color:#a6a4a2;letter-spacing:-0.320px;">Rechercher les erreurs</span>
<span class="t" style="left:1215.5px;top:107.84px;font-size:12px;font-weight:400;color:#a6a4a2;letter-spacing:-0.072px;">Terminer &amp;</span>
<span class="t" style="left:1213.3px;top:123.84px;font-size:12px;font-weight:400;color:#a6a4a2;letter-spacing:0.014px;">fusionner</span>
<span class="t" style="left:56px;top:147.57px;font-size:11.5px;font-weight:400;color:#323130;letter-spacing:-0.353px;">Créer</span>
<span class="t" style="left:192px;top:147.57px;font-size:11.5px;font-weight:400;color:#323130;letter-spacing:-0.107px;">Démarrer la fu</span>
<span class="t" style="left:609px;top:147.57px;font-size:11.5px;font-weight:400;color:#323130;letter-spacing:0.125px;">Champs d&#x27;écriture et d&#x27;insertion</span>
<span class="t" style="left:1021px;top:147.57px;font-size:11.5px;font-weight:400;color:#323130;letter-spacing:-0.042px;">Aperçu des résultats</span>
<span class="t" style="left:1221px;top:147.57px;font-size:11.5px;font-weight:400;color:#323130;letter-spacing:-0.092px;">Terminer</span>
<span class="t" style="left:301px;top:150.84px;font-size:12px;font-weight:400;color:#252423;letter-spacing:-0.134px;">Entrer une nou<u>v</u>elle liste...</span>
<span class="t" style="left:301px;top:178.84px;font-size:12px;font-weight:400;color:#252423;letter-spacing:-0.131px;">Utiliser une liste e<u>x</u>istante...</span>
<span class="t" style="left:301px;top:206.84px;font-size:12px;font-weight:400;color:#252423;letter-spacing:-0.109px;">Sélecti<u>o</u>nner dans les contacts Outlook...</span>
<span class="t" style="left:8.5px;top:743.03px;font-size:11.3px;font-weight:400;color:#444;letter-spacing:-0.255px;">Page 1 sur 1</span>
<span class="t" style="left:90px;top:743.03px;font-size:11.3px;font-weight:400;color:#444;letter-spacing:-0.121px;">247 mots</span>
<span class="t" style="left:1084px;top:743.03px;font-size:11.3px;font-weight:400;color:#444;letter-spacing:-0.453px;">Focus</span>
<span class="t" style="left:1390px;top:743.03px;font-size:11.3px;font-weight:400;color:#444;letter-spacing:-0.609px;">140 %</span>
<i class="abs" style="left:0;top:34px;width:1440px;height:1px;background:#1f4f98"></i><i class="abs" style="left:1px;top:35px;width:1437px;height:1px;background:#fdfcf9"></i><i class="abs" style="left:1px;top:35px;width:1px;height:722px;background:#fbfaf7"></i>
<div id="bl"></div><div id="br2"></div><div id="br"></div><div id="bb2"></div><div id="bb"></div>
</div>
</body>
</html>
